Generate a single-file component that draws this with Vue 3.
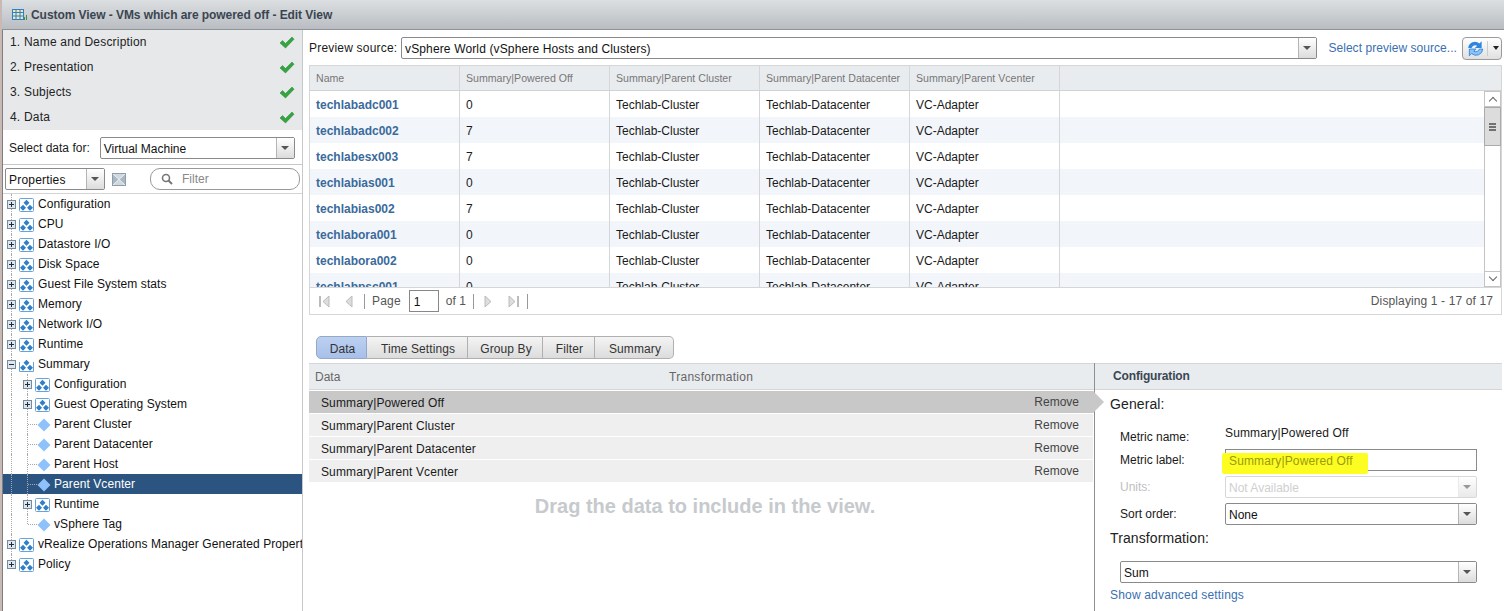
<script setup>
const steps = ['1. Name and Description', '2. Presentation', '3. Subjects', '4. Data']

const tree = [
  { name: 'Configuration', level: 0, type: 'group' },
  { name: 'CPU', level: 0, type: 'group' },
  { name: 'Datastore I/O', level: 0, type: 'group' },
  { name: 'Disk Space', level: 0, type: 'group' },
  { name: 'Guest File System stats', level: 0, type: 'group' },
  { name: 'Memory', level: 0, type: 'group' },
  { name: 'Network I/O', level: 0, type: 'group' },
  { name: 'Runtime', level: 0, type: 'group' },
  { name: 'Summary', level: 0, type: 'group', open: true },
  { name: 'Configuration', level: 1, type: 'group' },
  { name: 'Guest Operating System', level: 1, type: 'group' },
  { name: 'Parent Cluster', level: 1, type: 'leaf' },
  { name: 'Parent Datacenter', level: 1, type: 'leaf' },
  { name: 'Parent Host', level: 1, type: 'leaf' },
  { name: 'Parent Vcenter', level: 1, type: 'leaf', selected: true },
  { name: 'Runtime', level: 1, type: 'group' },
  { name: 'vSphere Tag', level: 1, type: 'leaf', last: true },
  { name: 'vRealize Operations Manager Generated Properties', level: 0, type: 'group' },
  { name: 'Policy', level: 0, type: 'group' }
]

const columns = ['Name', 'Summary|Powered Off', 'Summary|Parent Cluster', 'Summary|Parent Datacenter', 'Summary|Parent Vcenter']

const vms = [
  ['techlabadc001', '0'],
  ['techlabadc002', '7'],
  ['techlabesx003', '7'],
  ['techlabias001', '0'],
  ['techlabias002', '7'],
  ['techlabora001', '0'],
  ['techlabora002', '0'],
  ['techlabpsc001', '0']
]

const tabs = ['Data', 'Time Settings', 'Group By', 'Filter', 'Summary']
const metrics = ['Summary|Powered Off', 'Summary|Parent Cluster', 'Summary|Parent Datacenter', 'Summary|Parent Vcenter']
</script>

<template>
  <div class="page">
    <header class="titlebar">
      <svg class="title-icon" width="15" height="12" viewBox="0 0 15 12">
        <rect x="0.5" y="0.5" width="11" height="10" fill="#f3e7a6" stroke="#2b7fd6" />
        <path d="M0 3.5h12M0 7h12M4 0v11M8 0v11" stroke="#2b7fd6" fill="none" />
        <path d="M12.500 8v3M14.500 6v5" stroke="#3f8f4a" fill="none" />
      </svg>
      <span>Custom View - VMs which are powered off - Edit View</span>
    </header>

    <div class="body">
      <aside class="side">
        <ul class="steps">
          <li v-for="s in steps" :key="s" class="step">
            <span class="step-name">{{ s }}</span>
            <svg width="16" height="13" viewBox="0 0 16 13">
              <path d="M1 7l2.500-2.500 3 3L13 1l2 2.200L6.500 12z" fill="#34a540" stroke="#23832e" stroke-width="0.5" />
            </svg>
          </li>
        </ul>

        <div class="select-row">
          <label>Select data for:</label>
          <div class="combo grow">
            <span class="val">Virtual Machine</span>
            <span class="arrow"></span>
          </div>
        </div>

        <div class="filter-row">
          <div class="combo props">
            <span class="val">Properties</span>
            <span class="arrow"></span>
          </div>
          <svg class="clear" width="14" height="13" viewBox="0 0 14 13">
            <rect width="14" height="13" fill="#a9b8c2" />
            <path d="M0 0l7 6.500L14 0zM0 13l7-6.500L14 13z" fill="#cfd8de" />
            <path d="M0 0l14 13M14 0L0 13" stroke="#eef2f4" fill="none" />
            <rect x="0.5" y="0.5" width="13" height="12" fill="none" stroke="#8d9ea9" />
          </svg>
          <div class="filter">
            <svg width="12" height="12" viewBox="0 0 12 12">
              <circle cx="5" cy="5" r="3.500" fill="none" stroke="#777" stroke-width="1.600" />
              <path d="M7.500 7.500L11 11" stroke="#777" stroke-width="2" />
            </svg>
            <span>Filter</span>
          </div>
        </div>

        <ul class="tree">
          <li
            v-for="(n, i) in tree"
            :key="i"
            class="node"
            :class="{ selected: n.selected, leaf: n.type === 'leaf', nested: n.level === 1, last: n.last }"
          >
            <svg v-if="n.type === 'group'" class="expander" width="9" height="9" viewBox="0 0 9 9">
              <rect x="0.5" y="0.5" width="8" height="8" fill="#dfe7ee" stroke="#7b8a99" />
              <path :d="n.open ? 'M2 4.500h5' : 'M2 4.500h5M4.500 2v5'" stroke="#1d2f44" fill="none" />
            </svg>
            <svg v-if="n.type === 'group'" class="folder" width="15" height="14" viewBox="0 0 15 14">
              <path v-if="n.open" d="M0.500 4v9.500h14V4" fill="none" stroke="#6aa2d8" />
              <rect v-else x="0.500" y="0.500" width="14" height="13" rx="1" fill="#fff" stroke="#6aa2d8" />
              <path d="M7.500 1.500l3 3-3 3-3-3zM4 6.500l3 3-3 3-3-3zM11 6.500l3 3-3 3-3-3z" fill="#2f7fc9" transform="translate(0 0.300)" />
            </svg>
            <template v-else>
              <i class="dash"></i>
              <svg class="diamond" width="14" height="14" viewBox="0 0 14 14">
                <path d="M7 0.500L13.500 7 7 13.500 0.500 7z" fill="#8fc2fb" />
              </svg>
            </template>
            <span class="node-name">{{ n.name }}</span>
          </li>
        </ul>
      </aside>

      <main class="main">
        <div class="preview-row">
          <label>Preview source:</label>
          <div class="combo grow">
            <span class="val wide">vSphere World (vSphere Hosts and Clusters)</span>
            <span class="arrow"></span>
          </div>
          <a class="link">Select preview source...</a>
          <div class="refresh">
            <svg width="19" height="19" viewBox="0 0 17 17">
              <path d="M2 8a6 6 0 0 1 10-4l2-2v6H8l2-2a3.500 3.500 0 0 0-5 2z" fill="#2f86dd" />
              <path d="M15 9a6 6 0 0 1-10 4l-2 2V9h6l-2 2a3.500 3.500 0 0 0 5-2z" fill="#8cc4f5" stroke="#2f86dd" stroke-width="0.8" />
            </svg>
            <i class="sep"></i>
            <i class="tri"></i>
          </div>
        </div>

        <section class="grid">
          <div class="grid-head">
            <div v-for="c in columns" :key="c" class="cell">{{ c }}</div>
          </div>
          <div class="grid-body">
            <div class="rows">
              <div v-for="(vm, i) in vms" :key="vm[0]" class="row" :class="{ alt: i % 2 === 1 }">
                <div class="cols">
                  <div class="cell name">{{ vm[0] }}</div>
                  <div class="cell">{{ vm[1] }}</div>
                  <div class="cell">Techlab-Cluster</div>
                  <div class="cell">Techlab-Datacenter</div>
                  <div class="cell">VC-Adapter</div>
                </div>
              </div>
            </div>
            <div class="scrollbar">
              <span class="sb-btn"><i class="chev up"></i></span>
              <span class="sb-thumb"><i></i><i></i><i></i></span>
              <span class="sb-track"></span>
              <span class="sb-btn"><i class="chev down"></i></span>
            </div>
          </div>
          <div class="pager">
            <svg width="12" height="13" viewBox="0 0 12 13"><path d="M1 1v11" stroke="#bbb" stroke-width="2" /><path d="M10 1v11L4 6.500z" fill="#ddd" stroke="#bbb" /></svg>
            <svg class="p-prev" width="9" height="13" viewBox="0 0 9 13"><path d="M7 1v11L1 6.500z" fill="#ddd" stroke="#bbb" /></svg>
            <i class="bar"></i>
            <span class="page-word">Page</span>
            <span class="page-input">1</span>
            <span>of 1</span>
            <i class="bar tight"></i>
            <svg class="p-next" width="9" height="13" viewBox="0 0 9 13"><path d="M1 1v11l6-5.500z" fill="#ddd" stroke="#bbb" /></svg>
            <svg class="p-last" width="12" height="13" viewBox="0 0 12 13"><path d="M1 1v11l6-5.500z" fill="#ddd" stroke="#bbb" /><path d="M10 1v11" stroke="#bbb" stroke-width="2" /></svg>
            <i class="bar"></i>
            <span class="count">Displaying 1 - 17 of 17</span>
          </div>
        </section>

        <nav class="tabs">
          <button v-for="(t, i) in tabs" :key="t" class="tab" :class="{ active: i === 0 }">{{ t }}</button>
        </nav>

        <section class="editor">
          <div class="data-pane">
            <div class="pane-head">
              <span class="h-data">Data</span>
              <span class="h-trans-col">Transformation</span>
            </div>
            <div
              v-for="(m, i) in metrics"
              :key="m"
              class="metric"
              :class="{ current: i === 0 }"
            >
              <span class="metric-title">{{ m }}</span>
              <span class="remove">Remove</span>
            </div>
            <div class="drag-hint">Drag the data to include in the view.</div>
          </div>

          <div class="config">
            <div class="config-head">Configuration</div>
            <div class="config-body">
              <h4>General:</h4>
              <div class="form">
                <label class="l-name">Metric name:</label>
                <span class="metric-name">Summary|Powered Off</span>
                <label>Metric label:</label>
                <div class="input">
                  <span class="marker"></span>
                  <span class="input-text">Summary|Powered Off</span>
                </div>
                <label class="off">Units:</label>
                <div class="combo disabled">
                  <span class="val">Not Available</span>
                  <span class="arrow"></span>
                </div>
                <label>Sort order:</label>
                <div class="combo">
                  <span class="val">None</span>
                  <span class="arrow"></span>
                </div>
              </div>
              <h4 class="h-trans">Transformation:</h4>
              <div class="combo sum">
                <span class="val">Sum</span>
                <span class="arrow"></span>
              </div>
              <a class="link adv">Show advanced settings</a>
            </div>
          </div>
        </section>
      </main>
    </div>
  </div>
</template>

<style scoped>
* {
  box-sizing: border-box;
}
ul {
  list-style: none;
  margin: 0;
  padding: 0;
}
.page {
  width: 1504px;
  height: 611px;
  overflow: hidden;
  display: flex;
  flex-direction: column;
  background: #fff;
  color: #1a1a1a;
  border-left: 2px solid #c9b9b5;
  font: 12px "Liberation Sans", Arial, sans-serif;
}
.titlebar {
  height: 30px;
  flex: none;
  display: flex;
  align-items: center;
  gap: 4px;
  padding-left: 10px;
  background: linear-gradient(#dcdfe2, #b9bdc1);
  border-bottom: 1px solid #8f9498;
  font-weight: bold;
  font-size: 12px;
  letter-spacing: -0.06px;
  color: #3a4550;
}
.body {
  flex: 1;
  display: flex;
  min-height: 0;
}
.side {
  width: 301px;
  flex: none;
  border-left: 1px solid #7f7f7f;
  border-right: 1px solid #c6c9cc;
  display: flex;
  flex-direction: column;
}
.steps {
  background: #e6e8ea;
}
.step {
  height: 25px;
  display: flex;
  align-items: center;
  justify-content: space-between;
  padding: 0 7px;
  color: #222;
}
.step-name {
  letter-spacing: 0.2px;
  padding-bottom: 2px;
}
.select-row {
  height: 35px;
  display: flex;
  align-items: center;
  gap: 10px;
  padding: 1px 7px 0 6px;
  border-bottom: 1px solid #c8c8c8;
}
.combo {
  height: 22px;
  display: flex;
  background: #fff;
  border: 1px solid #8a8a8a;
  border-radius: 2px;
  color: #111;
}
.grow {
  flex: 1;
}
.val {
  flex: 1;
  padding-left: 3px;
  line-height: 22px;
  white-space: nowrap;
  overflow: hidden;
}
.val.wide {
  letter-spacing: 0.14px;
}
.arrow {
  width: 18px;
  flex: none;
  position: relative;
  border-left: 1px solid #b5b5b5;
  background: linear-gradient(#fff, #dcdcdc);
}
.arrow::after {
  content: "";
  position: absolute;
  left: 4px;
  top: 8px;
  border: 4px solid transparent;
  border-top: 4px solid #555;
}
.filter-row {
  height: 29px;
  display: flex;
  align-items: center;
  padding-left: 2px;
  border-bottom: 1px solid #d4d4d4;
}
.props {
  width: 100px;
}
.props .val {
  letter-spacing: 0.2px;
}
.clear {
  margin-left: 7px;
}
.filter {
  width: 150px;
  height: 22px;
  margin-left: 24px;
  display: flex;
  align-items: center;
  gap: 9px;
  padding-left: 10px;
  border: 1px solid #999;
  border-radius: 10px;
  color: #888;
}
.tree {
  flex: 1;
  overflow: hidden;
}
.node {
  position: relative;
  height: 20px;
  display: flex;
  align-items: center;
  padding-left: 4px;
  white-space: nowrap;
  overflow: hidden;
  color: #111;
  letter-spacing: 0.08px;
}
.node::before {
  content: "";
  position: absolute;
  left: 8px;
  top: 0;
  bottom: 0;
  border-left: 1px dotted #aaa;
}
.node:last-child::before {
  bottom: 10px;
}
.nested {
  padding-left: 20px;
}
.nested::after {
  content: "";
  position: absolute;
  left: 24px;
  top: 0;
  bottom: 0;
  border-left: 1px dotted #aaa;
}
.nested.last::after {
  bottom: 10px;
}
.leaf {
  padding-left: 34px;
}
.dash {
  position: absolute;
  left: 25px;
  top: 10px;
  width: 9px;
  border-top: 1px dotted #aaa;
}
.leaf .node-name {
  margin-left: 3px;
}
.expander {
  position: relative;
  z-index: 1;
  flex: none;
}
.folder {
  flex: none;
  margin: 2px 0 0 3px;
}
.diamond {
  flex: none;
  margin-top: 2px;
}
.node-name {
  margin-left: 4px;
}
.selected {
  background: #2b5580;
  color: #fff;
}
.main {
  flex: 1;
  min-width: 0;
  display: flex;
  flex-direction: column;
  padding: 0 2px 0 6px;
}
.preview-row {
  height: 35px;
  flex: none;
  display: flex;
  align-items: center;
  gap: 4px;
  padding-top: 1px;
}
.preview-row label {
  width: 88px;
  flex: none;
  letter-spacing: 0.2px;
  white-space: nowrap;
}
.link {
  color: #3a6fb0;
}
.preview-row .link {
  margin-left: 7px;
  margin-right: 1px;
  white-space: nowrap;
  letter-spacing: 0.05px;
}
.refresh {
  width: 40px;
  height: 23px;
  flex: none;
  display: flex;
  align-items: center;
  padding-left: 3px;
  border: 1px solid #9a9a9a;
  border-radius: 4px;
  background: linear-gradient(#fff, #e0e0e0);
}
.sep {
  width: 1px;
  height: 15px;
  margin-left: 2px;
  background: #ccc;
}
.tri {
  margin: 3px 0 0 5px;
  border: 3.5px solid transparent;
  border-top: 4px solid #222;
}
.grid {
  flex: none;
  border: 1px solid #d4d6d8;
  width: 1193px;
}
.grid-head {
  height: 25px;
  display: flex;
  background: #e9ecef;
  border-bottom: 1px solid #d0d2d4;
  color: #777;
  font-size: 10.6px;
}
.grid-head .cell {
  line-height: 25px;
}
.cell {
  width: 150px;
  flex: none;
  padding-left: 6px;
  border-right: 1px solid #d4d6d8;
  white-space: nowrap;
}
.grid-body {
  height: 196px;
  display: flex;
  overflow: hidden;
}
.rows {
  flex: 1;
  overflow: hidden;
}
.row {
  height: 26px;
}
.alt {
  background: #f2f6fa;
}
.cols {
  height: 100%;
  display: flex;
  line-height: 28px;
}
.name {
  font-weight: bold;
  color: #3a6a9c;
}
.scrollbar {
  width: 17px;
  flex: none;
  display: flex;
  flex-direction: column;
  background: #fff;
}
.sb-btn {
  height: 16px;
  flex: none;
  display: flex;
  align-items: center;
  justify-content: center;
  border: 1px solid #c4c4c4;
}
.chev {
  width: 6px;
  height: 6px;
  border-left: 1px solid #666;
  border-top: 1px solid #666;
}
.chev.up {
  transform: translateY(2px) rotate(45deg);
}
.chev.down {
  transform: translateY(-2px) rotate(225deg);
}
.sb-thumb {
  height: 39px;
  flex: none;
  display: flex;
  flex-direction: column;
  align-items: center;
  justify-content: center;
  gap: 1px;
  background: #dcdcdc;
  border: 1px solid #aaa;
}
.sb-thumb i {
  width: 7px;
  height: 2px;
  background: #707070;
}
.sb-track {
  flex: 1;
  border-left: 1px solid #c4c4c4;
  border-right: 1px solid #c4c4c4;
}
.pager {
  height: 27px;
  display: flex;
  align-items: center;
  padding: 0 8px 0 9px;
  border-top: 1px solid #d4d6d8;
  color: #555;
  background: #fff;
}
.p-prev {
  margin-left: 14px;
}
.bar {
  width: 1px;
  height: 15px;
  margin: 0 7px 0 10px;
  background: #999;
}
.bar.tight {
  margin: 0 10px 0 7px;
}
.page-word {
  letter-spacing: 0.2px;
}
.p-next {
  margin-right: 15px;
}
.p-last + .bar {
  margin: 0 0 0 7px;
}
.page-input {
  width: 30px;
  height: 22px;
  margin: 0 7px 0 8px;
  padding-left: 4px;
  line-height: 23px;
  border: 1px solid #888;
  color: #111;
}
.count {
  margin-left: auto;
  letter-spacing: 0.12px;
}
.tabs {
  margin: 21px 0 4px 7px;
  display: grid;
  grid-template-columns: 51px 101px 75px 52px 79px;
  height: 23px;
  flex: none;
}
.tab {
  height: 23px;
  padding: 2px 0 0 2px;
  margin: 0;
  font: inherit;
  letter-spacing: 0.1px;
  color: #333;
  background: linear-gradient(#f4f4f4, #dcdcdc);
  border: 1px solid #b0b0b0;
  border-left-width: 0;
}
.tab:first-child {
  border-left-width: 1px;
  border-radius: 5px 0 0 5px;
}
.tab:last-child {
  border-radius: 0 5px 5px 0;
}
.tab.active {
  background: linear-gradient(#bcd0f0, #a8c0ea);
  border-color: #94a8c8;
}
.editor {
  flex: 1;
  min-height: 0;
  display: flex;
}
.data-pane {
  width: 785px;
  flex: none;
}
.pane-head {
  height: 27px;
  display: flex;
  align-items: center;
  padding-left: 6px;
  margin-bottom: 1px;
  background: #e9ecef;
  border-top: 1px solid #d4d6d8;
  border-bottom: 1px solid #d4d6d8;
  color: #666;
}
.h-data {
  width: 354px;
}
.h-trans-col {
  letter-spacing: 0.28px;
}
.metric {
  height: 22px;
  margin-bottom: 1px;
  display: flex;
  align-items: center;
  justify-content: space-between;
  padding: 0 14px 0 12px;
  width: 784px;
  background: #efefef;
  position: relative;
}
.metric-title {
  letter-spacing: 0.12px;
  padding-top: 2px;
}
.current {
  background: #c8c8c8;
}
.current::after {
  content: "";
  position: absolute;
  left: 100%;
  top: 0;
  border: 11px solid transparent;
  border-left: 11px solid #c8c8c8;
  border-right-width: 0;
}
.remove {
  color: #444;
}
.drag-hint {
  margin-top: 12px;
  text-align: center;
  font-size: 20px;
  font-weight: bold;
  color: #c6cacd;
  line-height: 24px;
  padding-left: 7px;
}
.config {
  flex: 1;
  min-width: 0;
  border-left: 1px solid #8f8f8f;
}
.config-head {
  height: 27px;
  line-height: 25px;
  padding-left: 18px;
  font-weight: bold;
  letter-spacing: -0.15px;
  color: #3a4652;
  background: #e9ecef;
  border-top: 1px solid #d4d6d8;
  border-bottom: 1px solid #d4d6d8;
}
.config-body {
  padding: 5px 25px 0 15px;
}
h4 {
  margin: 0;
  font-size: 14px;
  font-weight: normal;
  line-height: 18px;
  letter-spacing: 0.1px;
  color: #222;
}
.form {
  margin: 9px 0 0 10px;
  display: grid;
  grid-template-columns: 105px 1fr;
  grid-auto-rows: 22px;
  row-gap: 5px;
  align-items: center;
}
.l-name {
  transform: translateY(4px);
}
.metric-name {
  letter-spacing: 0.15px;
}
.input {
  height: 22px;
  position: relative;
  border: 1px solid #8a8a8a;
  display: flex;
  align-items: center;
}
.input-text {
  position: relative;
  padding: 2px 0 0 3px;
  letter-spacing: 0.15px;
  color: #9a9a10;
  white-space: nowrap;
}
.marker {
  position: absolute;
  left: -4px;
  top: 3px;
  width: 146px;
  height: 21px;
  background: #fdfd22;
  border-radius: 2px;
}
.off {
  color: #c0c0c0;
}
.disabled {
  border-color: #d8d8d8;
  color: #cfcfcf;
}
.disabled .arrow {
  border-left-color: #ddd;
  opacity: 0.6;
}
.h-trans {
  margin-top: 4px;
}
.sum {
  margin: 14px 0 0 10px;
}
.adv {
  display: block;
  margin-top: 5px;
  letter-spacing: 0.18px;
}
</style>

<style>
body {
  margin: 0;
  background: #fff;
}
</style>
